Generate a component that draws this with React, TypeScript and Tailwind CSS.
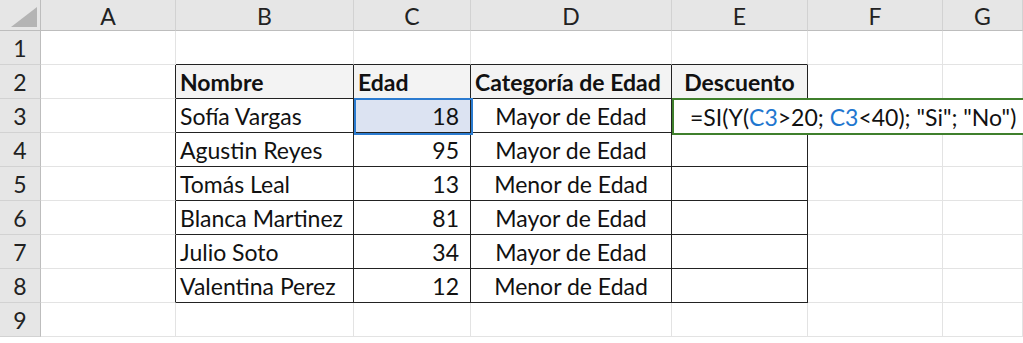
import React from 'react';

const columns = ['A', 'B', 'C', 'D', 'E', 'F', 'G'];

const people = [
    { name: 'Sofía Vargas', age: 18, category: 'Mayor de Edad' },
    { name: 'Agustin Reyes', age: 95, category: 'Mayor de Edad' },
    { name: 'Tomás Leal', age: 13, category: 'Menor de Edad' },
    { name: 'Blanca Martinez', age: 81, category: 'Mayor de Edad' },
    { name: 'Julio Soto', age: 34, category: 'Mayor de Edad' },
    { name: 'Valentina Perez', age: 12, category: 'Menor de Edad' },
];

const font = { fontFamily: 'Lato, "Liberation Sans", sans-serif' };

// plain grid cell; table cells get dark borders on the sides that touch the table
function Cell({ className = '', children }: { className?: string; children?: React.ReactNode }) {
    return <div className={`flex items-center border-r border-b overflow-visible whitespace-nowrap ${className}`}>{children}</div>;
}

export default function App() {
    const rows = Array.from({ length: 9 }, (_, i) => i + 1);

    return (
        <div className="relative w-[1023px] h-[343px] overflow-hidden bg-white text-[23px] text-[#111]" style={font}>
            <div className="grid grid-cols-[41px_135px_178px_117px_201px_136px_135px_1fr] grid-rows-[31px_repeat(9,34px)]">
                {/* corner */}
                <div className="relative bg-[#e6e6e6] border-r border-b border-[#bdbdbd]">
                    <div className="absolute right-[3px] bottom-[3px] w-0 h-0 border-l-[26px] border-l-transparent border-b-[20px] border-b-[#b4b4b4]" />
                </div>
                {columns.map((c) => (
                    <div key={c} className="flex items-center justify-center bg-[#e6e6e6] border-r border-b border-[#bdbdbd] border-r-[#d2d2d2] text-[#222] pt-[2px]">
                        {c}
                    </div>
                ))}

                {rows.map((r) => {
                    const person = r >= 3 && r <= 8 ? people[r - 3] : null;
                    const isHead = r === 2;
                    const inTable = isHead || person !== null;
                    const aboveTable = r === 1;
                    return (
                        <React.Fragment key={r}>
                            <div className="flex items-center justify-center bg-[#e6e6e6] border-r border-b border-[#bdbdbd] border-b-[#d2d2d2] text-[#222] pt-[2px]">
                                {r}
                            </div>
                            {/* A */}
                            <Cell className={inTable ? 'border-[#e3e3e3] border-r-[#222]' : 'border-[#e3e3e3]'} />
                            {/* B */}
                            <Cell
                                className={
                                    inTable
                                        ? `pl-[4px] pt-[2px] border-[#222] ${isHead ? 'bg-[#f3f3f3] font-bold' : ''}`
                                        : aboveTable
                                            ? 'border-[#e3e3e3] border-b-[#222]'
                                            : 'border-[#e3e3e3]'
                                }
                            >
                                {isHead ? 'Nombre' : person?.name}
                            </Cell>
                            {/* C */}
                            <Cell
                                className={
                                    inTable
                                        ? `pt-[2px] border-[#222] ${isHead ? 'bg-[#f3f3f3] font-bold pl-[4px]' : 'justify-end pr-[11px]'} ${r === 3 ? 'bg-[#dce3f2]' : ''}`
                                        : aboveTable
                                            ? 'border-[#e3e3e3] border-b-[#222]'
                                            : 'border-[#e3e3e3]'
                                }
                            >
                                {isHead ? 'Edad' : person?.age}
                            </Cell>
                            {/* D */}
                            <Cell
                                className={
                                    inTable
                                        ? `pt-[2px] border-[#222] ${isHead ? 'bg-[#f3f3f3] font-bold pl-[4px]' : 'justify-center'}`
                                        : aboveTable
                                            ? 'border-[#e3e3e3] border-b-[#222]'
                                            : 'border-[#e3e3e3]'
                                }
                            >
                                {isHead ? 'Categoría de Edad' : person?.category}
                            </Cell>
                            {/* E */}
                            <Cell
                                className={
                                    inTable
                                        ? `pt-[2px] border-[#222] ${isHead ? 'bg-[#f3f3f3] font-bold justify-center' : ''}`
                                        : aboveTable
                                            ? 'border-[#e3e3e3] border-b-[#222]'
                                            : 'border-[#e3e3e3]'
                                }
                            >
                                {isHead ? 'Descuento' : null}
                            </Cell>
                            {/* F, G */}
                            <Cell className="border-[#e3e3e3]" />
                            <Cell className="border-[#e3e3e3]" />
                        </React.Fragment>
                    );
                })}
            </div>

            {/* active cell C3 */}
            <div className="absolute left-[354px] top-[98px] w-[119px] h-[37px] border-2 border-[#2b7bd0] pointer-events-none" />

            {/* cell being edited: E3 */}
            <div className="absolute left-[672px] top-[98px] w-[400px] h-[37px] border-2 border-[#3f7f2c] bg-white flex items-center pl-[16px] pt-[2px] whitespace-pre">
                <span>=SI(Y(</span>
                <span className="text-[#1f77cf]">C3</span>
                <span>&gt;20; </span>
                <span className="text-[#1f77cf]">C3</span>
                <span>&lt;40); "Si"; "No")</span>
            </div>
        </div>
    );
}
